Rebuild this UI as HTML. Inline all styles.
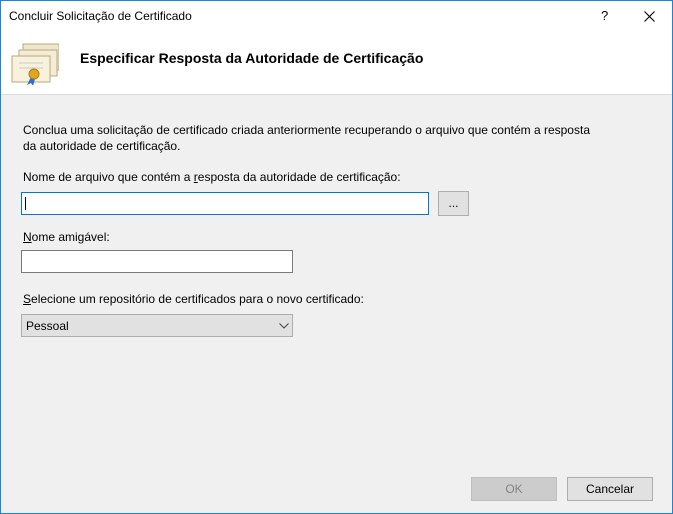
<!DOCTYPE html>
<html><head><style>
body{margin:0;width:673px;height:514px;overflow:hidden;font-family:"Liberation Sans",sans-serif;font-size:12px;color:#000}
.win{position:absolute;left:0;top:0;width:671px;height:512px;border:1px solid #1a84d8;background:#f0f0f0}
.hdr{position:absolute;left:0;top:0;width:671px;height:93px;background:#fff;border-bottom:1px solid #dcdcdc}
.a{position:absolute;white-space:nowrap}
.box{position:absolute;background:#fff;border:1px solid #7a7a7a;box-sizing:border-box}
.btn{position:absolute;background:#e1e1e1;border:1px solid #adadad;box-sizing:border-box;text-align:center}
u{text-decoration:underline}
</style></head><body>
<div class="win">
<div class="hdr">
<div class="a" style="left:8px;top:8px;font-size:12px">Concluir Solicitação de Certificado</div>
<div class="a" style="left:600px;top:7px;font-size:13px">?</div>
<svg class="a" style="left:643px;top:10px" width="11" height="11"><path d="M0.5 0.5L10.5 10.5M10.5 0.5L0.5 10.5" stroke="#000" stroke-width="1.1"/></svg>
<svg class="a" style="left:8px;top:42px" width="50" height="42">
<rect x="14" y="1" width="36" height="26" fill="#efe6cc" stroke="#b8a880"/>
<rect x="10" y="7" width="38" height="26" fill="#f4ecd4" stroke="#b8a880"/>
<rect x="3" y="13" width="38" height="26" fill="#f8f1dc" stroke="#b8a880"/>
<line x1="10" y1="20" x2="34" y2="20" stroke="#ccc"/><line x1="10" y1="25" x2="34" y2="25" stroke="#ccc"/>
<path d="M22 34l-4 8 4-2 2 3 2-7z" fill="#2b6fd0"/>
<circle cx="25" cy="31" r="5" fill="#e0a820" stroke="#b07a10"/>
</svg>
<div class="a" style="left:79px;top:49px;font-size:14px;font-weight:bold">Especificar Resposta da Autoridade de Certificação</div>
</div>
<div class="a" style="left:22px;top:121px;line-height:16px">Conclua uma solicitação de certificado criada anteriormente recuperando o arquivo que contém a resposta<br>da autoridade de certificação.</div>
<div class="a" style="left:22px;top:169px">Nome de arquivo que contém a <u>r</u>esposta da autoridade de certificação:</div>
<div class="box" style="left:20px;top:191px;width:408px;height:23px;border-color:#0078d7"><div style="position:absolute;left:3px;top:4px;width:1px;height:13px;background:#000"></div></div>
<div class="btn" style="left:437px;top:190px;width:31px;height:25px;line-height:22px">...</div>
<div class="a" style="left:22px;top:229px"><u>N</u>ome amigável:</div>
<div class="box" style="left:20px;top:249px;width:272px;height:23px"></div>
<div class="a" style="left:22px;top:291px"><u>S</u>elecione um repositório de certificados para o novo certificado:</div>
<div class="box" style="left:20px;top:313px;width:272px;height:23px;background:#e1e1e1;border-color:#adadad"><span style="position:absolute;left:4px;top:4px">Pessoal</span>
<svg style="position:absolute;left:257px;top:8px" width="10" height="6"><path d="M0.5 0.5L5 5L9.5 0.5" fill="none" stroke="#444"/></svg></div>
<div class="btn" style="left:470px;top:476px;width:86px;height:24px;line-height:22px;background:#cccccc;border-color:#bfbfbf;color:#838383">OK</div>
<div class="btn" style="left:566px;top:476px;width:86px;height:24px;line-height:22px">Cancelar</div>
</div>
</body></html>
